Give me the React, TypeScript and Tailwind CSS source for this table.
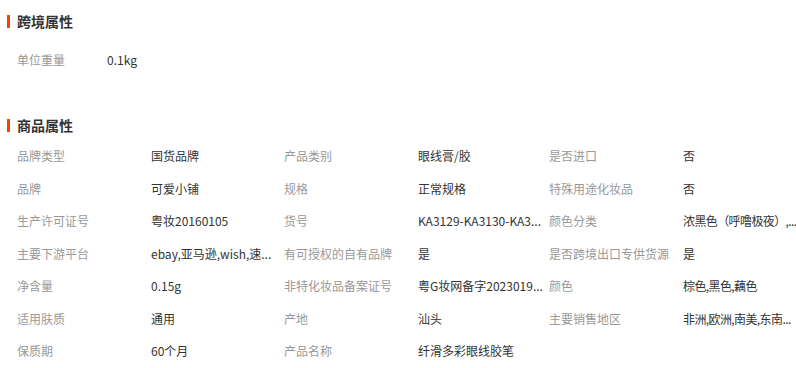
import React from "react";

const font = { fontFamily: '"Microsoft YaHei", "Noto Sans CJK SC", "Noto Sans", sans-serif' };

function Heading({ title }: { title: string }) {
  return (
    <div className="flex items-center h-[20px]">
      <div className="w-[3px] h-[13px] bg-[#ff4000] ml-[7px] mr-[7px]" />
      <div className="text-[14px] font-bold text-[#333] leading-[20px]">{title}</div>
    </div>
  );
}

const rows: [string, string][][] = [
  [["品牌类型", "国货品牌"], ["产品类别", "眼线膏/胶"], ["是否进口", "否"]],
  [["品牌", "可爱小铺"], ["规格", "正常规格"], ["特殊用途化妆品", "否"]],
  [["生产许可证号", "粤妆20160105"], ["货号", "KA3129-KA3130-KA3..."], ["颜色分类", "浓黑色（呼噜极夜）,..."]],
  [["主要下游平台", "ebay,亚马逊,wish,速..."], ["有可授权的自有品牌", "是"], ["是否跨境出口专供货源", "是"]],
  [["净含量", "0.15g"], ["非特化妆品备案证号", "粤G妆网备字2023019..."], ["颜色", "棕色,黑色,藕色"]],
  [["适用肤质", "通用"], ["产地", "汕头"], ["主要销售地区", "非洲,欧洲,南美,东南..."]],
  [["保质期", "60个月"], ["产品名称", "纤滑多彩眼线胶笔"], ["", ""]],
];

const valueW = ["w-[133px] shrink-0", "w-[131px] shrink-0", "flex-1 tracking-[-0.6px]"];

export default function App() {
  return (
    <div className="w-[796px] h-[368px] bg-white overflow-hidden" style={font}>
      <div className="pt-[11px]">
        <Heading title="跨境属性" />
      </div>
      <div className="flex items-center h-[32.5px] mt-[12.75px] pl-[17px] text-[12px]">
        <div className="w-[90px] text-[#999]">单位重量</div>
        <div className="text-[#333]">0.1kg</div>
      </div>
      <div className="mt-[39px]">
        <Heading title="商品属性" />
      </div>
      <div className="mt-[4.5px] pl-[17px] text-[12px]">
        {rows.map((r, i) => (
          <div key={i} className="flex items-center h-[32.5px]">
            {r.map(([l, v], j) => (
              <React.Fragment key={j}>
                <div className="w-[134px] shrink-0 text-[#999] whitespace-nowrap">{l}</div>
                <div className={`${valueW[j]} text-[#333] whitespace-nowrap`}>{v}</div>
              </React.Fragment>
            ))}
          </div>
        ))}
      </div>
    </div>
  );
}
